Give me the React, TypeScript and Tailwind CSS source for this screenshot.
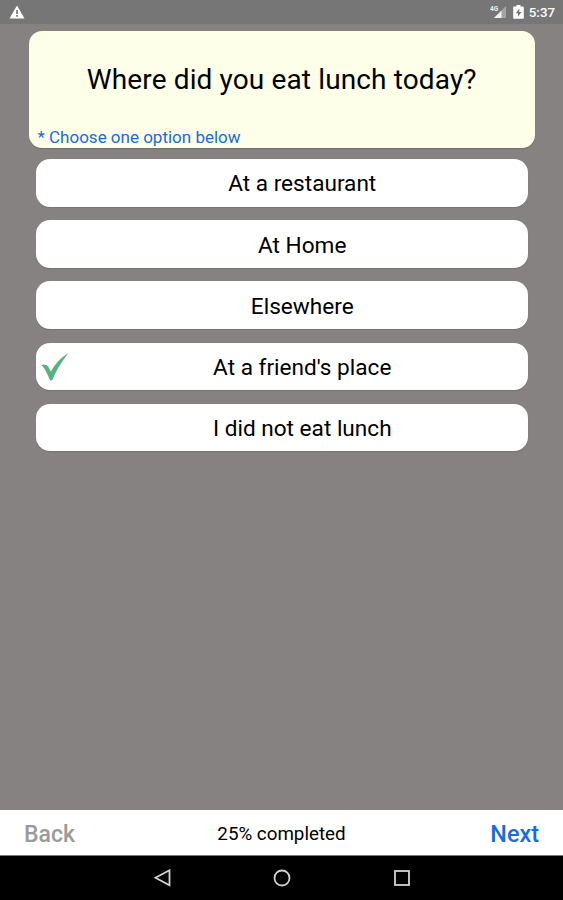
import React, { useState } from 'react';

interface Option {
    id: string;
    label: string;
}

const options: Option[] = [
    { id: 'restaurant', label: 'At a restaurant' },
    { id: 'home', label: 'At Home' },
    { id: 'elsewhere', label: 'Elsewhere' },
    { id: 'friend', label: "At a friend's place" },
    { id: 'none', label: 'I did not eat lunch' },
];

const CheckMark = () => (
    <svg width="28" height="28" viewBox="0 0 28 28" fill="#58b27f" className="mt-px">
        <path d="M0.4 12.2C2.6 10.8 5.8 11.6 7.2 13.8C8.3 15.5 9.2 17 10 18.6C14 11.2 20 4 27.4 0.3C21.8 7 16 16 11.6 26.5C10.8 27.7 9.2 27.7 8.6 26.5C6.6 21.4 4.2 15.4 0.4 12.2Z" />
    </svg>
);

const StatusBar = () => (
    <div className="flex h-[24px] shrink-0 items-center justify-between bg-[#767676] pr-[8px] pl-[9px]">
        <svg width="16" height="14" viewBox="0 0 16 14">
            <path d="M8 0.5L15.5 13.5H0.5Z" fill="#fff" />
            <path d="M7.2 5h1.7v4H7.2zM7.2 10h1.7v1.7H7.2z" fill="#767676" />
        </svg>
        <div className="flex items-center">
            <svg width="17" height="14" viewBox="0 0 17 14">
                <path d="M16 1V13H4Z" fill="#a5a5a5" />
                <path d="M11.500 5.500V13H4Z" fill="#f2f2f2" />
                <text x="0" y="5.6" fontSize="6.5" fontWeight="700" fill="#eee" fontFamily="Roboto, sans-serif">4G</text>
            </svg>
            <svg width="11" height="14" viewBox="0 0 11 14" className="ml-[6px]">
                <path d="M3.5 0h4v1.5H10a.8.8 0 0 1 .8.8V13a.8.8 0 0 1-.8.8H1a.8.8 0 0 1-.8-.8V2.3a.8.8 0 0 1 .8-.8h2.5z" fill="#fff" />
                <path d="M6.3 3.5L2.8 8.3h2.2v3.5l3.5-4.8H6.3z" fill="#767676" />
            </svg>
            <span className="ml-[5px] pt-[2px] text-[13.3px] leading-none font-medium text-white">5:37</span>
        </div>
    </div>
);

const NavBar = () => (
    <div className="flex h-[44px] shrink-0 items-center justify-center gap-[102px] bg-black">
        <svg width="18" height="18" viewBox="0 0 18 18" fill="none" stroke="#d2d2d2" strokeWidth="1.8">
            <path d="M16.5 1.3V16.3L2.5 8.8Z" />
        </svg>
        <svg width="18" height="18" viewBox="0 0 18 18" fill="none" stroke="#d2d2d2" strokeWidth="1.8">
            <circle cx="9" cy="9" r="7.5" />
        </svg>
        <svg width="18" height="18" viewBox="0 0 18 18" fill="none" stroke="#d2d2d2" strokeWidth="1.8">
            <rect x="2" y="2" width="14" height="14" />
        </svg>
    </div>
);

export default function App() {
    const [selected, setSelected] = useState('friend');

    return (
        <div className="flex h-[900px] w-[563px] flex-col overflow-hidden bg-[#868281] font-[Roboto,sans-serif] text-black">
            <StatusBar />

            <main className="flex flex-1 flex-col pt-[7px]">
                {/* Question */}
                <section className="mr-[28px] ml-[28.5px] flex h-[117px] flex-col rounded-[13px] bg-[#feffe8] shadow-[0_1px_1px_#706d6b]">
                    <h1 className="pt-[32px] text-center text-[28px] leading-[33px] tracking-[0.13px]">
                        Where did you eat lunch today?
                    </h1>
                    <p className="mt-auto mb-px pl-[9px] text-[17px] leading-[20px] text-[#176cdb]">
                        * Choose one option below
                    </p>
                </section>

                {/* Answers */}
                <div className="mt-[11px] flex flex-col gap-[13.7px] pr-[35.5px] pl-[36px]">
                    {options.map((option) => (
                        <button
                            key={option.id}
                            onClick={() => setSelected(option.id)}
                            className="flex h-[47.5px] items-center rounded-[14px] bg-white shadow-[0_1px_1px_#767371]"
                        >
                            <span className="flex w-[41px] shrink-0 pl-[5px]">
                                {selected === option.id && <CheckMark />}
                            </span>
                            <span className="flex-1 pt-[2.4px] text-center text-[22.6px] leading-[27px]">{option.label}</span>
                        </button>
                    ))}
                </div>
            </main>

            {/* Progress footer */}
            <footer className="grid h-[46px] shrink-0 grid-cols-3 items-center border-b border-[#777] bg-white px-[24px] pt-[3px]">
                <button className="text-left text-[23px] leading-none font-medium text-[#9b9b9b]">Back</button>
                <span className="pt-px text-center text-[18.8px] leading-none">25% completed</span>
                <button className="pt-px text-right text-[23.4px] leading-none font-medium text-[#176ce0]">Next</button>
            </footer>

            <NavBar />
        </div>
    );
}
